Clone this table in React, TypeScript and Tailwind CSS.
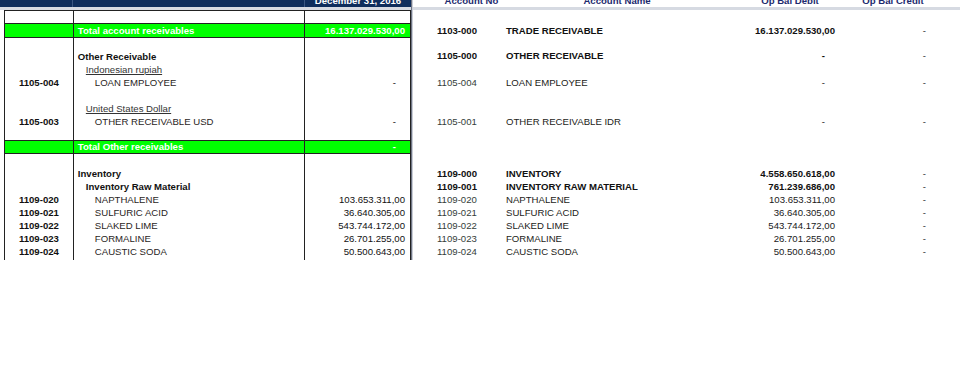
import React from "react";

type LeftRow =
  | { kind: "space"; h: string }
  | { kind: "green"; h: string; label: string; amount: string; dash?: boolean }
  | { kind: "line"; code?: string; text?: string; indent?: string; bold?: boolean; under?: boolean; amount?: string; dash?: boolean; top?: boolean };

const leftRows: LeftRow[] = [
  { kind: "line", top: true },
  { kind: "green", h: "h-[15px]", label: "Total account receivables", amount: "16.137.029.530,00" },
  { kind: "space", h: "h-[11px]" },
  { kind: "line", text: "Other Receivable", indent: "pl-[4px]", bold: true },
  { kind: "line", text: "Indonesian rupiah", indent: "pl-[12px]", under: true },
  { kind: "line", code: "1105-004", text: "LOAN EMPLOYEE", indent: "pl-[21px]", amount: "-", dash: true },
  { kind: "line" },
  { kind: "line", text: "United States Dollar", indent: "pl-[12px]", under: true },
  { kind: "line", code: "1105-003", text: "OTHER RECEIVABLE USD", indent: "pl-[21px]", amount: "-", dash: true },
  { kind: "line" },
  { kind: "green", h: "h-[14px]", label: "Total Other receivables", amount: "-", dash: true },
  { kind: "space", h: "h-[12px]" },
  { kind: "line", text: "Inventory", indent: "pl-[4px]", bold: true },
  { kind: "line", text: "Inventory Raw Material", indent: "pl-[12px]", bold: true },
  { kind: "line", code: "1109-020", text: "NAPTHALENE", indent: "pl-[21px]", amount: "103.653.311,00" },
  { kind: "line", code: "1109-021", text: "SULFURIC ACID", indent: "pl-[21px]", amount: "36.640.305,00" },
  { kind: "line", code: "1109-022", text: "SLAKED LIME", indent: "pl-[21px]", amount: "543.744.172,00" },
  { kind: "line", code: "1109-023", text: "FORMALINE", indent: "pl-[21px]", amount: "26.701.255,00" },
  { kind: "line", code: "1109-024", text: "CAUSTIC SODA", indent: "pl-[21px]", amount: "50.500.643,00" },
  { kind: "line" },
];

type RightRow =
  | { kind: "space"; h: string }
  | { kind: "line"; code: string; name: string; debit: string; bold?: boolean };

const rightRows: RightRow[] = [
  { kind: "space", h: "h-[13px]" },
  { kind: "line", code: "1103-000", name: "TRADE RECEIVABLE", debit: "16.137.029.530,00", bold: true },
  { kind: "space", h: "h-[12px]" },
  { kind: "line", code: "1105-000", name: "OTHER RECEIVABLE", debit: "-", bold: true },
  { kind: "space", h: "h-[14px]" },
  { kind: "line", code: "1105-004", name: "LOAN EMPLOYEE", debit: "-" },
  { kind: "space", h: "h-[26px]" },
  { kind: "line", code: "1105-001", name: "OTHER RECEIVABLE IDR", debit: "-" },
  { kind: "space", h: "h-[39px]" },
  { kind: "line", code: "1109-000", name: "INVENTORY", debit: "4.558.650.618,00", bold: true },
  { kind: "line", code: "1109-001", name: "INVENTORY RAW MATERIAL", debit: "761.239.686,00", bold: true },
  { kind: "line", code: "1109-020", name: "NAPTHALENE", debit: "103.653.311,00" },
  { kind: "line", code: "1109-021", name: "SULFURIC ACID", debit: "36.640.305,00" },
  { kind: "line", code: "1109-022", name: "SLAKED LIME", debit: "543.744.172,00" },
  { kind: "line", code: "1109-023", name: "FORMALINE", debit: "26.701.255,00" },
  { kind: "line", code: "1109-024", name: "CAUSTIC SODA", debit: "50.500.643,00" },
  { kind: "space", h: "h-[13px]" },
];

function LeftPanel() {
  return (
    <div className="w-[411px] shrink-0">
      {/* header row, scrolled so only its lower half shows */}
      <div className="flex h-[7px] overflow-hidden bg-[#0e2d5c]">
        <div className="w-[73px] border-r border-[#3a5682]" />
        <div className="w-[232px] border-r border-[#3a5682]" />
        <div className="flex-1 text-center">
          <div className="-mt-[5px] leading-[12px] font-bold text-white">December 31, 2016</div>
        </div>
      </div>
      <div className="h-[3px] bg-[#d6dae2]" />
      <div className="ml-[4px] border-l border-[#222]">
        {leftRows.map((r, i) => {
          if (r.kind === "space") {
            return (
              <div key={i} className={`flex ${r.h}`}>
                <div className="w-[69px] border-r border-[#222]" />
                <div className="w-[232px] border-r border-[#222]" />
                <div className="w-[106px] border-r border-[#222]" />
              </div>
            );
          }
          if (r.kind === "green") {
            return (
              <div key={i} className={`flex ${r.h} border-y border-[#222] bg-[#00ff00] font-bold text-white`}>
                <div className="h-full w-[69px] border-r border-[#222]" />
                <div className="flex h-full w-[232px] items-center border-r border-[#222] pl-[4px] pt-[1px]">{r.label}</div>
                <div
                  className={`flex h-full w-[106px] items-center justify-end border-r border-[#222] pt-[1px] ${
                    r.dash ? "pr-[14px]" : "pr-[5px]"
                  }`}
                >
                  {r.amount}
                </div>
              </div>
            );
          }
          return (
            <div key={i} className={`flex h-[13px] ${r.top ? "border-t border-[#222]" : ""}`}>
              <div className="flex h-full w-[69px] items-center justify-center border-r border-[#222] pt-[3px] font-bold text-[#111]">
                {r.code}
              </div>
              <div
                className={`flex h-full w-[232px] items-center border-r border-[#222] pt-[3px] ${r.indent ?? ""} ${
                  r.bold ? "font-bold text-[#111]" : "text-[#2a1e24]"
                }`}
              >
                <span className={r.under ? "text-[#333] underline underline-offset-[1px]" : ""}>{r.text}</span>
              </div>
              <div
                className={`flex h-full w-[106px] items-center justify-end border-r border-[#222] pt-[3px] text-[#111] ${
                  r.dash ? "pr-[14px]" : "pr-[5px]"
                }`}
              >
                {r.amount}
              </div>
            </div>
          );
        })}
      </div>
    </div>
  );
}

function RightPanel() {
  return (
    <div className="flex-1">
      <div className="flex h-[7px] overflow-hidden pl-[24px] font-bold text-[#1d2a6e]">
        {[
          ["w-[69px]", "Account No"],
          ["w-[222px]", "Account Name"],
          ["w-[124px]", "Op Bal Debit"],
          ["w-[82px]", "Op Bal Credit"],
        ].map(([w, t]) => (
          <div key={t} className={`${w} text-center`}>
            <div className="-mt-[5px] leading-[12px]">{t}</div>
          </div>
        ))}
      </div>
      <div className="h-[3px] bg-[#d6dae2]" />
      <div className="pl-[24px]">
        {rightRows.map((r, i) =>
          r.kind === "space" ? (
            <div key={i} className={r.h} />
          ) : (
            <div key={i} className={`flex h-[13px] items-center pt-[3px] ${r.bold ? "font-bold text-[#111]" : ""}`}>
              <div className={`w-[69px] ${r.bold ? "" : "text-[#34403a]"}`}>{r.code}</div>
              <div className={`w-[230px] ${r.bold ? "" : "text-[#231c20]"}`}>{r.name}</div>
              <div className={`w-[99px] text-right ${r.debit === "-" ? "pr-[10px]" : ""} ${r.bold ? "" : "text-[#1a1a1a]"}`}>
                {r.debit}
              </div>
              <div className="w-[91px] text-right font-normal text-[#333]">-</div>
            </div>
          )
        )}
      </div>
    </div>
  );
}

export default function App() {
  return (
    <div className="h-[375px] w-[960px] bg-white font-['Liberation_Sans',Arial,sans-serif] text-[9.6px]">
      <div className="flex h-[260px] overflow-hidden">
        <LeftPanel />
        <div className="flex w-[2px] shrink-0">
          <div className="w-[1px] bg-[#6f7584]" />
          <div className="w-[1px] bg-[#c9cdd6]" />
        </div>
        <RightPanel />
      </div>
    </div>
  );
}
